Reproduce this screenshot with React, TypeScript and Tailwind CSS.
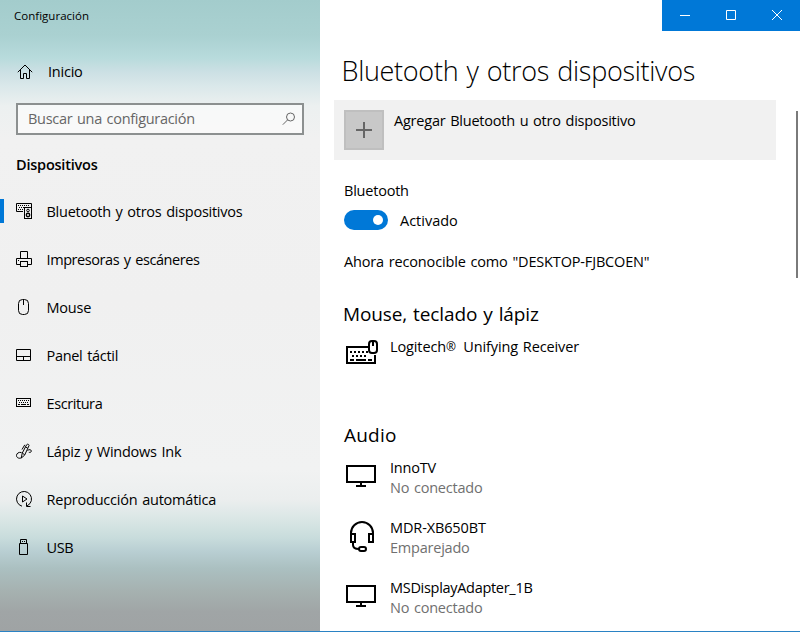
import type { ReactNode } from "react";

function Glyph({ children }: { children: ReactNode }) {
  return (
    <svg className="size-4 shrink-0" viewBox="0 0 16 16" fill="none" stroke="currentColor">
      {children}
    </svg>
  );
}

const DevicesIcon = () => (
  <Glyph>
    <path d="M7 8.5H.5v-8h15V4" />
    <path d="M2 2.5h12M3 4.5h5M2 6.5h5" strokeDasharray="1 1" />
    <rect x="8.5" y="4.5" width="7" height="11" />
    <circle cx="12" cy="7.5" r="1.3" />
    <circle cx="12" cy="12" r="1.7" strokeWidth="1.4" />
  </Glyph>
);
const PrinterIcon = () => (
  <Glyph>
    <path d="M4.5 7V.5h7V7M4 13.5H.5v-6h15v6H12" />
    <rect x="4.5" y="10.5" width="7" height="5" />
    <path d="M2 9.5h1" />
  </Glyph>
);
const MouseIcon = () => (
  <Glyph>
    <rect x="2.5" y=".5" width="10" height="15" rx="4" />
    <path d="M7.5 1v5" />
  </Glyph>
);
const TouchpadIcon = () => (
  <Glyph>
    <path d="M.5 2.5h14v11H.5zM1 9.5h13M7.5 10v3" />
  </Glyph>
);
const KeyboardIcon = () => (
  <Glyph>
    <rect x=".5" y="3.5" width="14" height="8" />
    <path d="M2 5.5h11M3 7.5h10" strokeDasharray="1 1" />
    <path d="M2 9.5h2M5 9.5h5M11 9.5h2" />
  </Glyph>
);
const InkIcon = () => (
  <Glyph>
    <path d="M5.3 15l.9-4.8L10.6 1.800c.8-1.300 3-.3 2.300 1.100L8.600 12.200z" />
    <path d="M9.500 4l2.200 1.200M6.400 10.200l2.200 1.500M8.800 1.800L6 6.500" />
    <path d="M5.500 9.500C2.500 8.800.5 10.500.5 12.500c0 2.800 3.500 3.200 4.800 2.300M11.500 7.500c2-1.500 3.500-.8 3.800.3.300 1.500-1.500 1.800-2.500 1.500" />
  </Glyph>
);
const AutoplayIcon = () => (
  <Glyph>
    <path d="M6 15.200A7.500 7.500 0 1 1 14 12.500l-3 2.500" />
    <path d="M14.500 15.500h-4v-4" />
    <path d="M6.500 5v6l4.500-3z" />
  </Glyph>
);
const UsbIcon = () => (
  <Glyph>
    <path d="M4.500 4V.5h6V4M3.500 4.500h8v11h-8z" />
    <path d="M6 2.500h1M8 2.500h1" />
  </Glyph>
);

const nav = [
  { label: "Bluetooth y otros dispositivos", Icon: DevicesIcon, active: true, tracking: "tracking-[-0.26px]" },
  { label: "Impresoras y escáneres", Icon: PrinterIcon, tracking: "tracking-[-0.42px]" },
  { label: "Mouse", Icon: MouseIcon, tracking: "tracking-[-0.2px]" },
  { label: "Panel táctil", Icon: TouchpadIcon, tracking: "tracking-[-0.3px]" },
  { label: "Escritura", Icon: KeyboardIcon, tracking: "tracking-[-0.42px]" },
  { label: "Lápiz y Windows Ink", Icon: InkIcon, tracking: "tracking-[-0.24px]" },
  { label: "Reproducción automática", Icon: AutoplayIcon, tracking: "tracking-[-0.22px]" },
  { label: "USB", Icon: UsbIcon, tracking: "tracking-[-0.35px]" },
];

function BigIcon({ children }: { children: ReactNode }) {
  return (
    <svg className="size-9 shrink-0" viewBox="0 0 36 36" fill="none" stroke="currentColor" strokeWidth="2">
      {children}
    </svg>
  );
}
const ReceiverIcon = () => (
  <BigIcon>
    <path d="M24 10H3v16h28V18" />
    <path d="M6 15h18M8 19h16" strokeDasharray="2 2" />
    <path d="M6 23h4M12 23h10M24 23h4" />
    <rect x="25" y="4" width="8" height="12" rx="3" />
    <path d="M29 4v5" />
  </BigIcon>
);
const MonitorIcon = () => (
  <BigIcon>
    <path d="M3 8h28v16H3zM17 24v3M12 28h10" />
  </BigIcon>
);
const HeadsetIcon = () => (
  <BigIcon>
    <path d="M7 17v-2a11 11 0 0 1 22 0v2" />
    <path d="M7 16h4v8H7zM25 16h4v8h-4z" />
    <path d="M9 24v3c0 2.500 2 4 6 4" />
    <rect x="15" y="29" width="7" height="4" rx="2" />
  </BigIcon>
);

interface DeviceProps {
  name: ReactNode;
  status?: string;
  Icon: () => ReactNode;
  tracking?: string;
}

function Device({ name, status, Icon, tracking = "" }: DeviceProps) {
  return (
    <li className="flex h-[60px] gap-2.5 pl-2.5">
      <Icon />
      <div className="leading-5">
        <p className={tracking}>{name}</p>
        {status && <p className="text-[#707070]">{status}</p>}
      </div>
    </li>
  );
}

export default function App() {
  return (
    <div className="flex h-[632px] w-[800px] flex-col overflow-hidden bg-white font-['Open_Sans',sans-serif] text-[14.5px] tracking-[-0.22px] text-black [word-spacing:1.2px]">
      <div className="flex h-[631px]">
        <aside className="w-80 shrink-0 bg-[linear-gradient(180deg,#a3cccc_0px,#aad1d1_36px,#b8dbdc_58px,#cce0e4_72px,#dae8ea_86px,#ecf0f0_106px,#f1f1f1_140px,#f0f0f0_300px,#f1f2f2_470px,#ebeeee_500px,#d9e6e5_520px,#c8dcdc_538px,#b8ced2_552px,#abc0c1_568px,#a6b2b1_590px,#a0a5a6_612px,#9fa3a4_631px)]">
          <h2 className="h-8 pl-[14px] text-[11.5px] leading-8 tracking-[0.02px]">Configuración</h2>
          <div className="mt-4 flex h-12 items-center gap-[15px] pl-[17px]">
            <Glyph>
              <path d="M.8 8.200L8 1l7.200 7.200M3.500 6v8.500h3v-5h3v5h3V6" />
            </Glyph>
            <span>Inicio</span>
          </div>
          <div className="mx-4 mt-[7px] flex h-8 items-center justify-between border-2 border-[#8c9090] bg-white/60 pl-2.5 text-[#666666]">
            <span className="tracking-[-0.3px]">Buscar una configuración</span>
            <svg className="mr-1.5 size-[14px]" viewBox="0 0 14 14" fill="none" stroke="currentColor">
              <circle cx="8.500" cy="5" r="4" />
              <path d="M5.700 7.800L.8 12.700" />
            </svg>
          </div>
          <h3 className="mt-[18px] pl-4 font-semibold leading-6">Dispositivos</h3>
          <nav className="mt-[11px]">
            {nav.map(({ label, Icon, active, tracking }) => (
              <div key={label} className="flex h-12 items-center">
                <span className={active ? "mr-3 mb-0.5 h-6 w-1 bg-[#0078d7]" : "mr-3 w-1"} />
                <span className="mr-[14.5px] mb-0.5">
                  <Icon />
                </span>
                <span className={tracking}>{label}</span>
              </div>
            ))}
          </nav>
        </aside>
        <main className="flex min-w-0 flex-1 flex-col">
          <div className="ml-auto flex h-[31px] w-[138px] shrink-0 bg-[#0078d7] pt-[7px] text-white">
            {["M3 8.500h10", "M3.500 3.500h9v9h-9z", "M3 3l10 10M13 3L3 13"].map((d) => (
              <span key={d} className="flex w-[46px] justify-center">
                <Glyph>
                  <path d={d} />
                </Glyph>
              </span>
            ))}
          </div>
          <div className="flex flex-1 justify-between">
            <div className="w-[456px] pl-[14px]">
              <h1 className="mt-5 h-[49px] pl-[7.5px] text-[27px] font-light leading-10 tracking-[-0.3px] [word-spacing:1.5px]">
                Bluetooth y otros dispositivos
              </h1>
              <button className="flex h-[60px] w-full items-start gap-2.5 bg-[#f1f1f1] p-2.5 text-left [word-spacing:1.2px]">
                <span className="flex size-10 items-center justify-center border-2 border-[#bfbfbf] bg-[#c8c8c8]">
                  <Glyph>
                    <path d="M0 8h16M8 0v16" stroke="#666666" strokeWidth="2" />
                  </Glyph>
                </span>
                <span className="leading-[22px]">Agregar Bluetooth u otro dispositivo</span>
              </button>
              <div className="pl-2.5">
                <p className="mt-5 leading-[22px]">Bluetooth</p>
                <div className="mt-2 flex h-5 items-center gap-3">
                  <span className="flex h-5 w-11 items-center justify-end rounded-full bg-[#0078d7] pr-[5px]">
                    <span className="size-2.5 rounded-full bg-white" />
                  </span>
                  <span className="pt-0.5 tracking-[0px]">Activado</span>
                </div>
                <p className="mt-[21px] leading-[22px] tracking-[-0.16px]">Ahora reconocible como "DESKTOP-FJBCOEN"</p>
                <h2 className="mt-[27px] -ml-px text-[19px] leading-7 tracking-[-0.12px]">Mouse, teclado y lápiz</h2>
              </div>
              <ul className="mt-[9px]">
                <Device
                  name={
                    <>
                      Logitech<span className="mr-[2.5px] align-[1px] text-[12px] leading-none">®</span> Unifying Receiver
                    </>
                  }
                  Icon={ReceiverIcon}
                  tracking="tracking-[-0.12px]"
                />
              </ul>
              <h2 className="mt-6 pl-2.5 text-[19px] leading-7 tracking-[0.2px]">Audio</h2>
              <ul className="mt-[9px]">
                <Device name="InnoTV" status="No conectado" Icon={MonitorIcon} />
                <Device name="MDR-XB650BT" status="Emparejado" Icon={HeadsetIcon} tracking="tracking-[-0.12px]" />
                <Device
                  name="MSDisplayAdapter_1B"
                  status="No conectado"
                  Icon={MonitorIcon}
                  tracking="tracking-[-0.3px]"
                />
              </ul>
            </div>
            <div className="mt-20 mr-0.5 h-[167px] w-0.5 bg-[#7a7a7a]" />
          </div>
        </main>
      </div>
      <div className="h-px bg-[#2a82c4]" />
    </div>
  );
}
